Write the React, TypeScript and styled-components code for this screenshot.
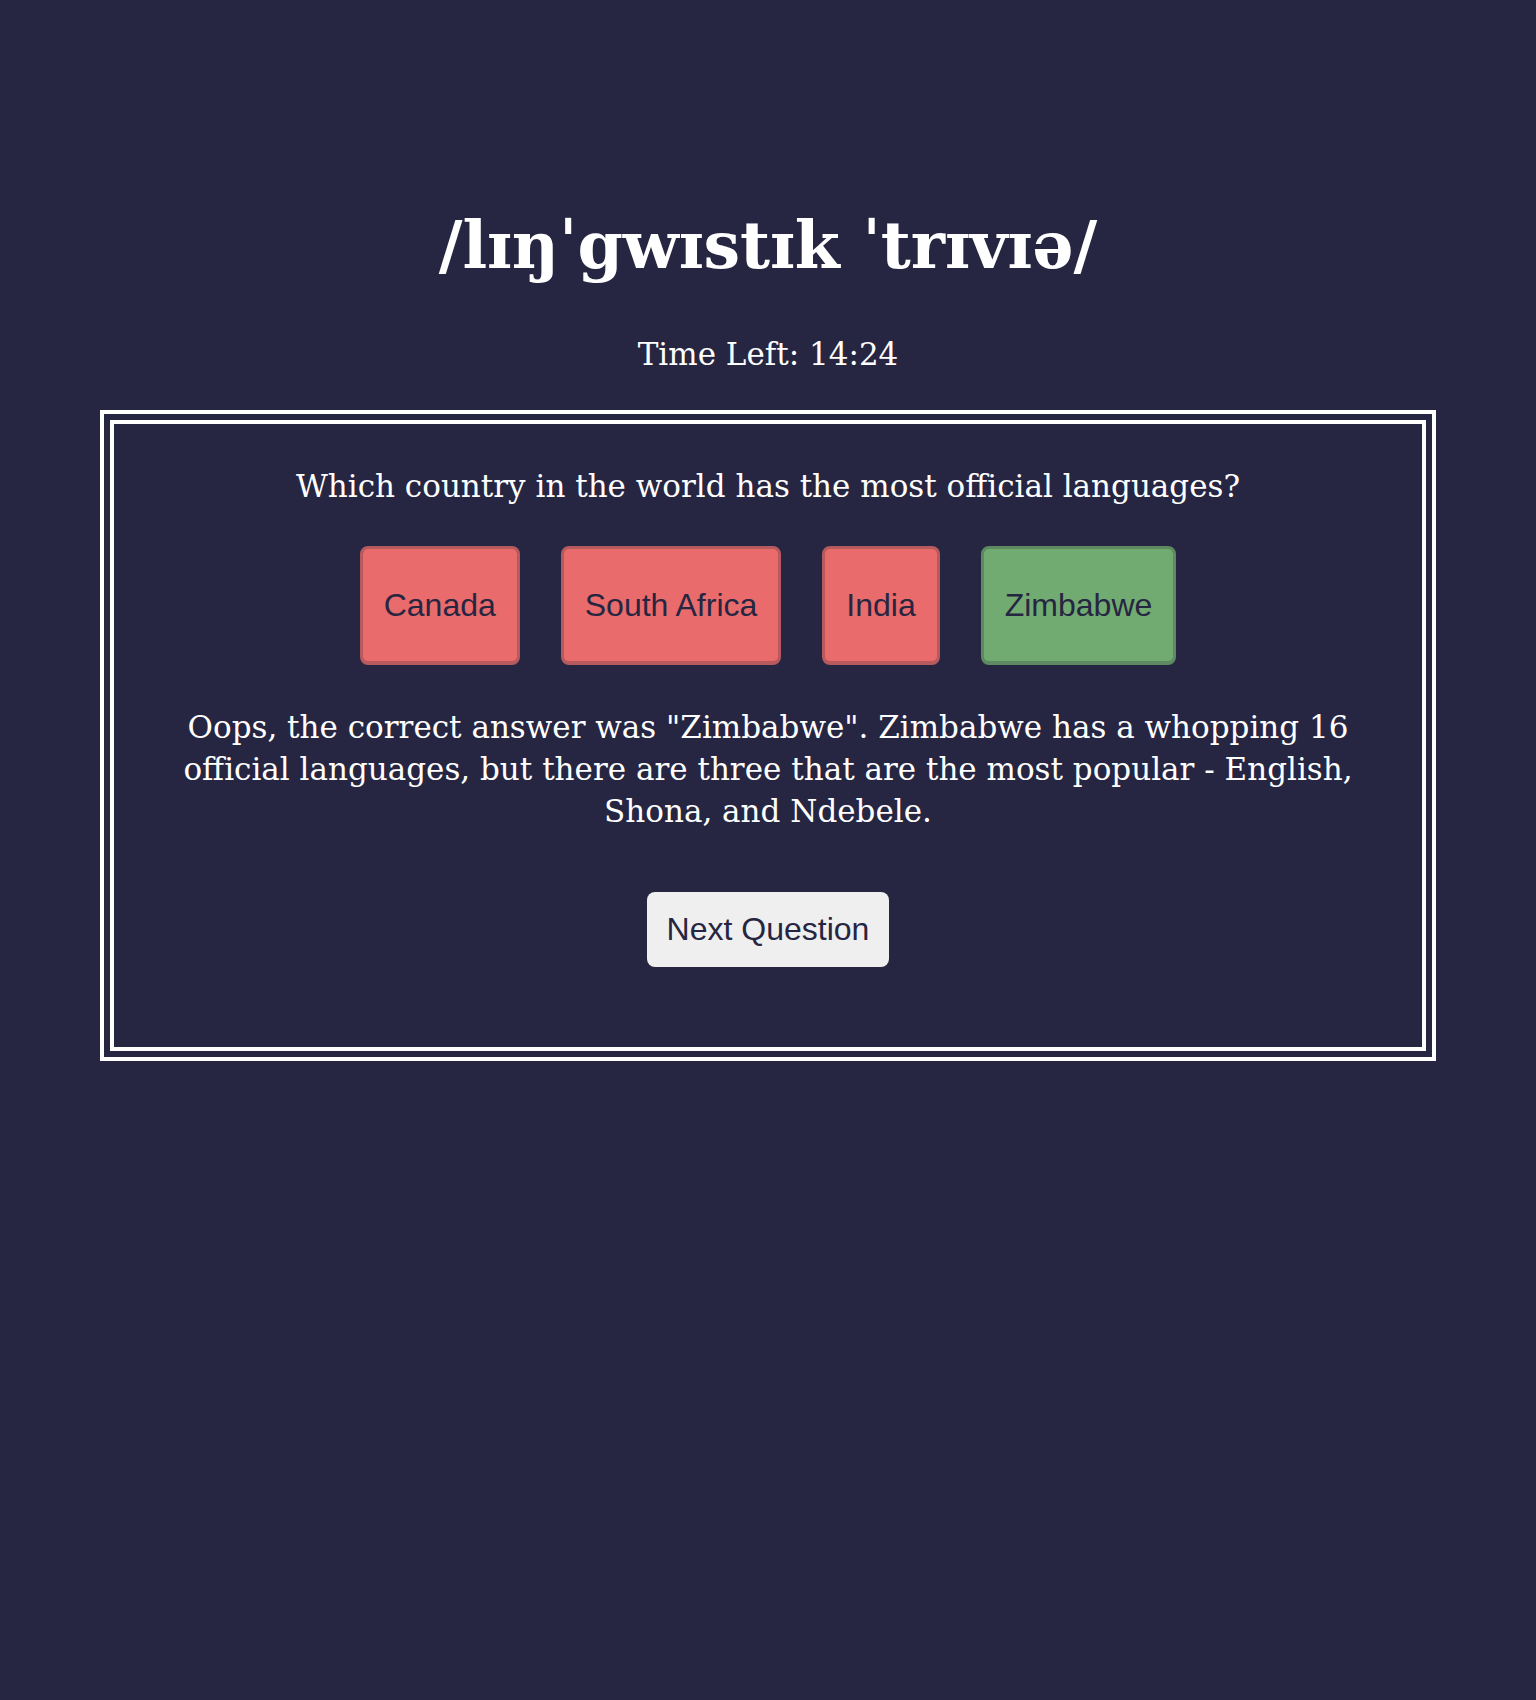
import React from 'react'
import styled, {createGlobalStyle} from 'styled-components'

const GlobalStyle = createGlobalStyle`
  body {
    margin: 0;
    background-color: #262642;
    color: #ffffff;
    font-family: "DejaVu Serif", Georgia, serif;
  }
`

type ChoiceState = 'wrong' | 'right'

interface IChoice {
  label: string
  state: ChoiceState
}

const choices: IChoice[] = [
  {label: 'Canada', state: 'wrong'},
  {label: 'South Africa', state: 'wrong'},
  {label: 'India', state: 'wrong'},
  {label: 'Zimbabwe', state: 'right'},
]

const App: React.FC = () => {
  return (
    <Page>
      <GlobalStyle />
      <Title>/lɪŋˈgwɪstɪk ˈtrɪvɪə/</Title>
      <Timer>Time Left: 14:24</Timer>
      <Frame>
        <Card>
          <Question>Which country in the world has the most official languages?</Question>
          <Choices>
            {choices.map(c => (
              <Choice key={c.label} $state={c.state}>{c.label}</Choice>
            ))}
          </Choices>
          <Explanation>
            Oops, the correct answer was "Zimbabwe". Zimbabwe has a whopping 16 official
            languages, but there are three that are the most popular - English, Shona, and
            Ndebele.
          </Explanation>
          <NextButton>Next Question</NextButton>
        </Card>
      </Frame>
    </Page>
  )
}

const Page = styled.div`
  min-height: 1700px;
  padding-top: 205px;
  box-sizing: border-box;
`

const Title = styled.h1`
  margin: 0;
  font-size: 65px;
  line-height: 80px;
  font-weight: bold;
  text-align: center;
`

const Timer = styled.p`
  margin: 48px 0 0;
  font-size: 31px;
  line-height: 42px;
  text-align: center;
`

const Frame = styled.div`
  margin: 35px 100px 0;
  border: 4px solid #ffffff;
  padding: 6px;
`

const Card = styled.div`
  border: 4px solid #ffffff;
  padding: 41px 0 80px;
  text-align: center;
`

const Question = styled.p`
  margin: 0;
  font-size: 31px;
  line-height: 42px;
`

const Choices = styled.div`
  display: flex;
  justify-content: center;
  gap: 41px;
  margin-top: 39px;
`

const Choice = styled.button<{$state: ChoiceState}>`
  font-family: "Liberation Sans", Arial, sans-serif;
  font-size: 32px;
  color: #262642;
  padding: 38px 21px;
  border-radius: 8px;
  border: 3px solid ${props => props.$state == 'right' ? '#5d8a60' : '#b65a5e'};
  border-bottom-width: 4px;
  padding-bottom: 37px;
  background-color: ${props => props.$state == 'right' ? '#72ab71' : '#e96b6b'};
  cursor: pointer;
`

const Explanation = styled.p`
  max-width: 1210px;
  margin: 41px auto 0;
  font-size: 31px;
  line-height: 42px;
`

const NextButton = styled.button`
  margin-top: 60px;
  font-family: "Liberation Sans", Arial, sans-serif;
  font-size: 32px;
  color: #262642;
  background-color: #efefef;
  border: none;
  border-radius: 8px;
  padding: 19px 20px;
  cursor: pointer;
`

export default App
